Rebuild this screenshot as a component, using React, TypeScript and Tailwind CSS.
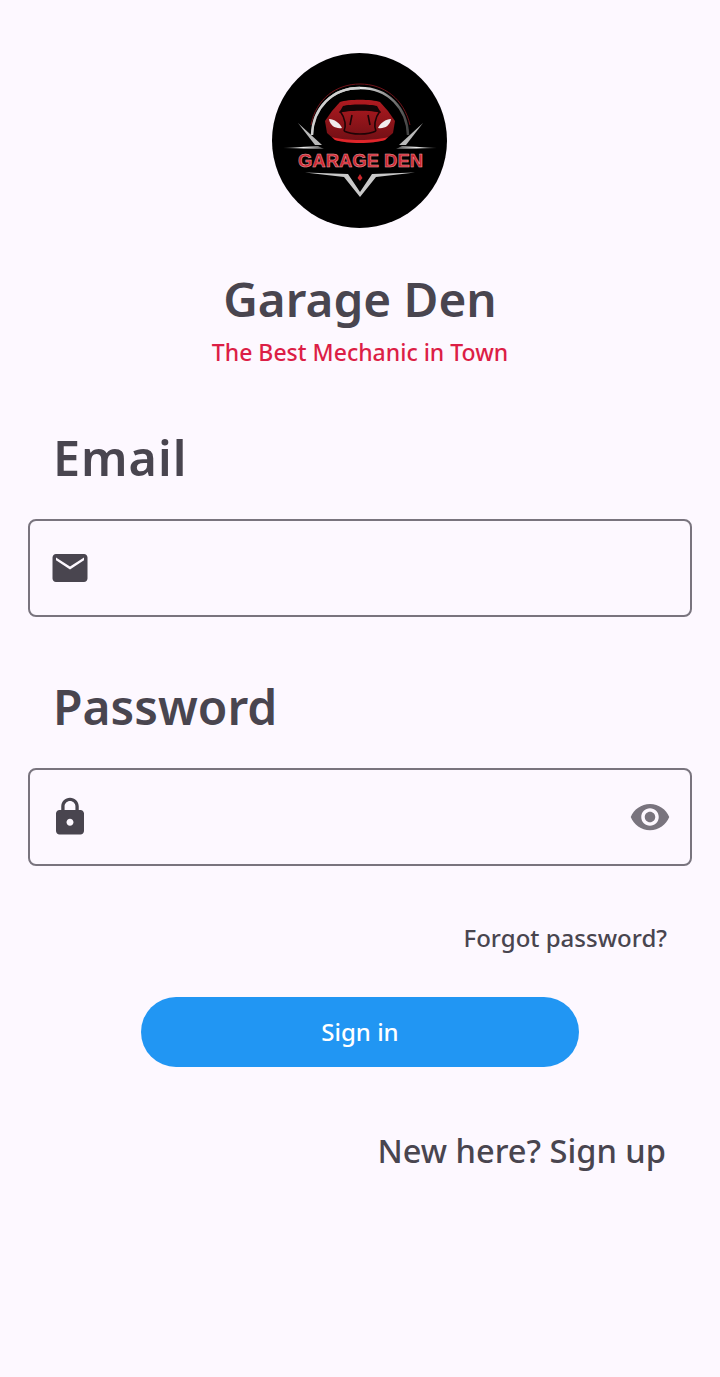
import { MdLock, MdVisibility } from "react-icons/md";

function MailIcon() {
  return (
    <svg viewBox="0 0 24 24" className="w-[42px] h-[42px] fill-[#49454f]">
      <path d="M20 4H4c-1.1 0-1.99.9-1.99 2L2 18c0 1.1.9 2 2 2h16c1.1 0 2-.9 2-2V6c0-1.1-.9-2-2-2zm0 3.6l-8 5.2-8-5.2V6l8 5.2L20 6v1.6z" />
    </svg>
  );
}

function Logo() {
  return (
    <svg viewBox="0 0 175 175" className="w-[175px] h-[175px] block">
      <defs>
        <linearGradient id="silver" x1="0" y1="0" x2="1" y2="0">
          <stop offset="0" stopColor="#444" />
          <stop offset="0.5" stopColor="#eee" />
          <stop offset="1" stopColor="#444" />
        </linearGradient>
        <linearGradient id="body" x1="0" y1="0" x2="0" y2="1">
          <stop offset="0" stopColor="#b01a20" />
          <stop offset="1" stopColor="#6e0f14" />
        </linearGradient>
      </defs>
      <circle cx="87.5" cy="87.5" r="87.5" fill="#000" />
      {/* arcs */}
      <path d="M39 72 C44 46 64 31 88 31 C112 31 132 46 138 72" fill="none" stroke="#6d1218" strokeWidth="1" />
      <path d="M40 82 C41 55 60 35 88 35 C116 35 135 55 136 82" fill="none" stroke="url(#silver)" strokeWidth="2.4" />
      <path d="M40 82 C41 55 60 35 88 35" fill="none" stroke="#cfcfcf" strokeWidth="2.4" />
      {/* car */}
      <path d="M53 68 L60 58 L68 49 C76 46 100 46 108 49 L116 58 L123 68 L121 80 L113 87 C100 91 76 91 63 87 L55 80 Z" fill="url(#body)" />
      <path d="M71 53 C78 51 98 51 105 53 L109 60 C100 57 76 57 67 60 Z" fill="#120506" />
      <path d="M60 84 C72 88 104 88 116 84 L113 87 C100 91 76 91 63 87 Z" fill="#e0262b" />
      <path d="M68 58 C74 66 74 74 72 78 M108 58 C102 66 102 74 104 78 M80 62 L78 72 M96 62 L98 72 M72 78 C80 82 96 82 104 78" fill="none" stroke="#1c0406" strokeWidth="1.6" />
      <path d="M57 66 C62 66 68 70 70 75 C64 76 58 73 57 66 Z" fill="#f1eded" />
      <path d="M119 66 C114 66 108 70 106 75 C112 76 118 73 119 66 Z" fill="#f1eded" />
      {/* wings */}
      <path d="M26 70 L50 92 L43 92 Z" fill="#b9b9b9" />
      <path d="M151 70 L127 92 L134 92 Z" fill="#b9b9b9" />
      <path d="M11 95 L46 93 L52 96 Z" fill="url(#silver)" />
      <path d="M165 95 L130 93 L124 96 Z" fill="url(#silver)" />
      {/* name */}
      <text
        x="26"
        y="114"
        textLength="125"
        lengthAdjust="spacingAndGlyphs"
        fill="#cf2530"
        stroke="#e9a3a6"
        strokeWidth="0.5"
        className="font-['Liberation_Sans',sans-serif] font-bold text-[19px]"
      >
        GARAGE DEN
      </text>
      {/* chevron */}
      <path d="M33 119.5 L76 121 L88 139 L100 121 L143 119.5 L104 124 L88 144 L72 124 Z" fill="#c9c9c9" />
      <path d="M88 121 L90.5 125 L88 128 L85.5 125 Z" fill="#c9262c" />
    </svg>
  );
}

function Field({ icon, trailing }: { icon: React.ReactNode; trailing?: React.ReactNode }) {
  return (
    <div className="flex items-center justify-between h-[98px] mx-[28px] px-[19px] border-2 border-[#79747e] rounded-[8px]">
      {icon}
      {trailing}
    </div>
  );
}

export default function App() {
  return (
    <div className="w-[720px] h-[1377px] bg-[#fdf8ff] flex flex-col font-['Noto_Sans',sans-serif] font-medium text-[#49454f] overflow-hidden">
      <div className="flex justify-center pt-[53px] pr-[1px]">
        <Logo />
      </div>

      <h1 className="mt-[38px] text-center text-[47.7px] leading-[66px] font-semibold">Garage Den</h1>
      <p className="mt-[1px] text-center text-[23px] leading-[38px] text-[#dc1e46]">
        The Best Mechanic in Town
      </p>

      <label className="mt-[51px] ml-[53px] text-[48.5px] tracking-[1px] leading-[70px] font-semibold">Email</label>
      <div className="mt-[27px]">
        <Field icon={<MailIcon />} />
      </div>

      <label className="mt-[55px] ml-[53px] text-[48px] leading-[70px] font-semibold">Password</label>
      <div className="mt-[26px]">
        <Field
          icon={<MdLock size={42} className="text-[#49454f]" />}
          trailing={<MdVisibility size={42} className="text-[#79747e]" />}
        />
      </div>

      <div className="mt-[54px] mr-[53px] text-right text-[24px] leading-[36px]">Forgot password?</div>

      <button className="mt-[41px] mx-auto w-[438px] h-[70px] rounded-full bg-[#2196f3] text-white text-[24px] font-medium">
        Sign in
      </button>

      <div className="mt-[61px] mr-[54px] text-right text-[32.6px] leading-[46px]">New here? Sign up</div>
    </div>
  );
}
